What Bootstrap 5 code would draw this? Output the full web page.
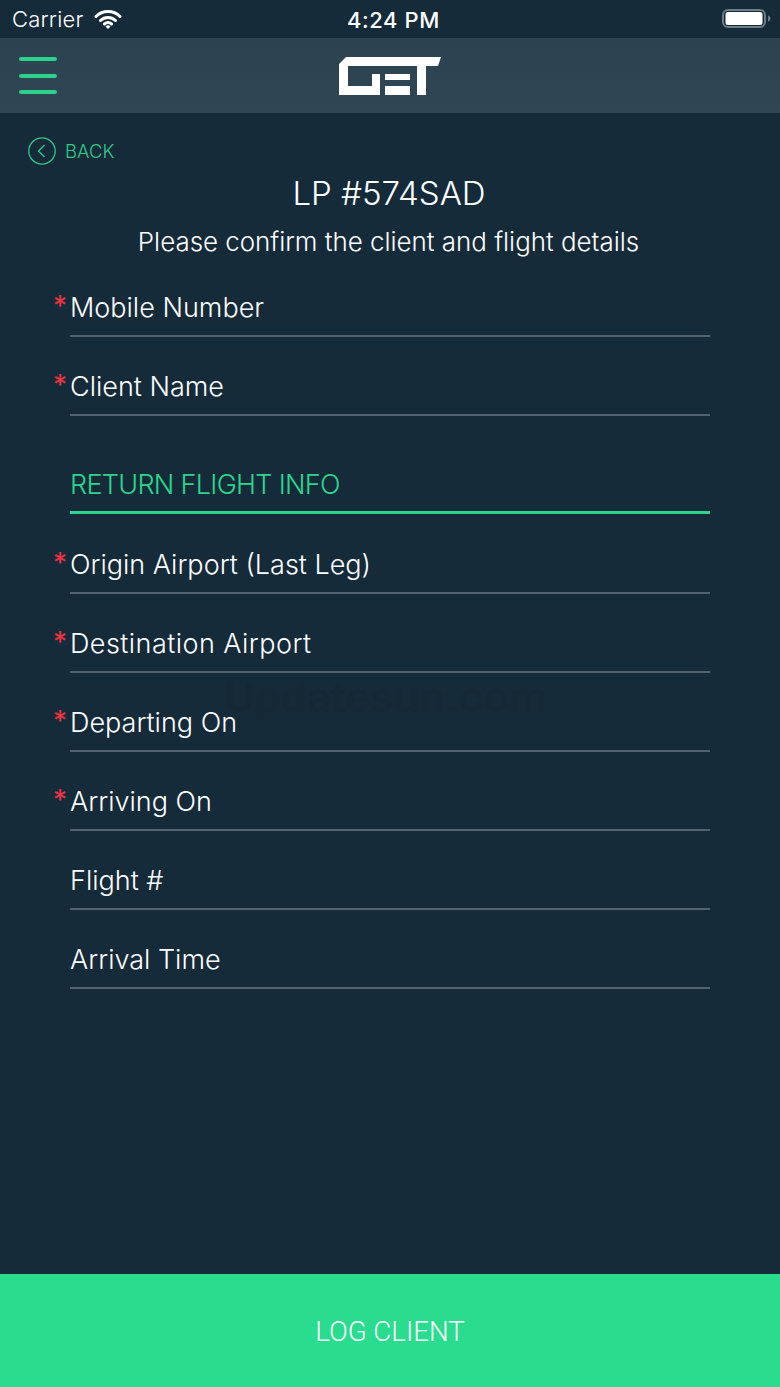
<!DOCTYPE html>
<html lang="en">
<head>
<meta charset="utf-8">
<link href="https://cdn.jsdelivr.net/npm/bootstrap@5.3.0/dist/css/bootstrap.min.css" rel="stylesheet">
<style>
html,body{height:100%}
body{background:#162b3a;color:#fff;font-family:Roboto,"Liberation Sans",sans-serif;font-weight:300}
.app-shell{height:1387px;width:780px;position:relative;overflow:hidden}
.status-strip{height:38px;padding:0 12px;font-weight:400;font-family:Inter,Roboto,sans-serif;position:relative}
.status-left{width:200px;font-size:22px;font-weight:300;letter-spacing:.2px;gap:10px}
.status-time{font-size:22px;font-weight:500;position:absolute;left:0;right:0;top:6px;text-align:center;line-height:28px;padding-left:7px;letter-spacing:.6px}
.battery-icon{margin-right:-4px}
.top-band{height:75px;background:linear-gradient(#2b4250,#2f4654);padding:0 19px;position:relative}
.burger-stack{gap:12.500px}
.burger-bar{display:block;width:38px;height:4px;border-radius:2px;background:#2ed18a}
.logo-mark{position:absolute;left:339px;top:19px}
.back-row{padding:24px 0 0 28px;height:66px;color:#2ecb88;font-size:18.500px;font-family:Inter,Roboto,sans-serif;font-weight:300;gap:9px}
.back-label{line-height:28px}
.lp-title{font-size:33px;line-height:40px;margin:-6px 2px 0 0;font-family:Inter,Roboto,sans-serif;font-weight:300}
.lp-sub{font-size:25.900px;line-height:32px;margin:13px 3px 0 0;font-family:Inter,Roboto,sans-serif;font-weight:300}
.form-zone{margin:0 70px;font-family:Inter,Roboto,sans-serif}
.field-row{height:79px;border-bottom:2px solid #51636f;position:relative;font-size:27px;line-height:34px;font-weight:300;display:flex;align-items:flex-end;padding-bottom:10px}
.field-star{position:absolute;left:-17px;bottom:15px;color:#ef3340;font-size:28px;line-height:28px;font-weight:400}
.wide-label{letter-spacing:.45px}
.section-row{height:98px;margin-bottom:1px;border-bottom:3px solid #2bd68c;color:#2bd68c;font-size:27px;line-height:34px;letter-spacing:-.7px;display:flex;align-items:flex-end;padding-bottom:9px;font-weight:300}
.log-btn{position:absolute;left:0;right:0;bottom:0;height:113px;padding-top:8px;background:#29dc8e;color:#fff;border:0;border-radius:0;font-size:27.700px;font-weight:300;font-family:Roboto,sans-serif}
.log-btn:hover{background:#29dc8e;color:#fff}
.ghost-mark{position:absolute;left:224px;top:669px;font-size:41.500px;line-height:56px;font-weight:700;color:#14252f;opacity:.4;font-family:Inter,sans-serif}
</style>
</head>
<body>
<div class="app-shell">
  <div class="ghost-mark">Updatesun.com</div>
  <div class="status-strip d-flex align-items-center">
    <span class="status-left d-flex align-items-center"><span>Carrier</span>
      <svg width="28" height="21" viewBox="0 0 28 21"><path d="M2 7.500a17 17 0 0 1 24 0M6.500 11.500a11 11 0 0 1 15 0M10.500 15a5.500 5.500 0 0 1 7 0" fill="none" stroke="#fff" stroke-width="3" stroke-linecap="round"/><path d="M14 20l-2.500-2.500a3.500 3.500 0 0 1 5 0z" fill="#fff"/></svg>
    </span>
    <span class="status-time">4:24 PM</span>
    <svg class="ms-auto battery-icon" width="50" height="22" viewBox="0 0 50 22"><rect x="1" y="2" width="42" height="17" rx="5" fill="none" stroke="#6d7d88" stroke-width="2"/><rect x="3.500" y="4" width="37" height="13" rx="2.500" fill="#fff"/><path d="M46 7.500c1.500.5 2.500 1.500 2.500 3s-1 2.500-2.500 3z" fill="#6d7d88"/></svg>
  </div>
  <nav class="top-band d-flex align-items-center">
    <div class="d-flex flex-column burger-stack"><span class="burger-bar"></span><span class="burger-bar"></span><span class="burger-bar"></span></div>
    <svg class="logo-mark" width="102" height="38" viewBox="0 0 102 38" fill="#fff"><path d="M7 0H102L99 9H87V38H78V9H9V29H33V17H41V38H0V7Z"/><path d="M46 17H71V23H46ZM46 29H71V38H46Z"/></svg>
  </nav>
  <div class="back-row d-flex align-items-start">
    <svg width="28" height="28" viewBox="0 0 28 28"><circle cx="14" cy="14" r="13.200" fill="none" stroke="#2ecb88" stroke-width="1.300"/><path d="M16.500 8l-6 6 6 6" fill="none" stroke="#2ecb88" stroke-width="1.300"/></svg>
    <span class="back-label">BACK</span>
  </div>
  <h1 class="lp-title text-center">LP #574SAD</h1>
  <p class="lp-sub text-center">Please confirm the client and flight details</p>
  <div class="form-zone">
    <div class="field-row"><span class="field-star">*</span>Mobile Number</div>
    <div class="field-row"><span class="field-star">*</span>Client Name</div>
    <div class="section-row">RETURN FLIGHT INFO</div>
    <div class="field-row"><span class="field-star">*</span>Origin Airport (Last Leg)</div>
    <div class="field-row wide-label"><span class="field-star">*</span>Destination Airport</div>
    <div class="field-row"><span class="field-star">*</span>Departing On</div>
    <div class="field-row"><span class="field-star">*</span>Arriving On</div>
    <div class="field-row">Flight #</div>
    <div class="field-row">Arrival Time</div>
  </div>
  <button class="btn log-btn" type="button">LOG CLIENT</button>
</div>
<script src="https://cdn.jsdelivr.net/npm/bootstrap@5.3.0/dist/js/bootstrap.bundle.min.js"></script>
</body>
</html>
